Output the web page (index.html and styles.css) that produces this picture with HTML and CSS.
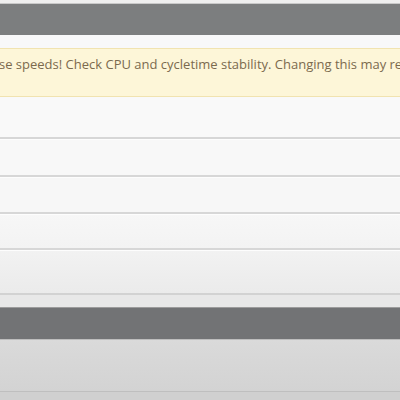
FILE: index.html
```html
<!DOCTYPE html>
<html lang="en">
<head>
    <meta charset="UTF-8">
    <title>Settings</title>
    <link rel="stylesheet" href="styles.css">
</head>
<body>
    <div class="top-strip"></div>

    <!-- first panel -->
    <div class="panel-heading"></div>
    <div class="panel-body">
        <div class="alert-warning">se speeds! Check CPU and cycletime stability. Changing this may re</div>
    </div>
    <div class="form-rows">
        <div class="form-row row-1"></div>
        <div class="form-row row-2"></div>
        <div class="form-row row-3"></div>
        <div class="form-row row-4"></div>
    </div>
    <div class="panel-gap"></div>

    <!-- second panel -->
    <div class="panel-heading dark"></div>
    <div class="panel-body-bottom"></div>
    <div class="panel-foot"></div>
</body>
</html>
```

FILE: styles.css
```css
body {
    font-family: 'Open Sans', 'DejaVu Sans', sans-serif;
    background-color: #d0d0d0;
    margin: 0;
    overflow: hidden;
}
.top-strip {
    height: 3px;
    background-color: #efefef;
    border-bottom: 1px solid #c9c9c9;
}
.panel-heading {
    height: 31px;
    background-color: #7c7e7f;
}
.panel-heading.dark {
    height: 31px;
    background-color: #727375;
    border-top: 1px solid #9c9c9c;
    border-bottom: 1px solid #bdbdbd;
}
.panel-body {
    background-color: #f8f8f9;
    padding-top: 13px;
}
.alert-warning {
    height: 49px;
    box-sizing: border-box;
    background-color: #fdf6d8;
    border-top: 1px solid #f1e3b0;
    border-bottom: 1px solid #f1e3b0;
    color: #7b6a4e;
    font-size: 13px;
    line-height: 18px;
    padding-top: 6px;
    white-space: nowrap;
    overflow: hidden;
    text-indent: -1px;
}
.form-rows {
    background-color: #f9f9f9;
    padding-top: 40px;
}
.form-row {
    border-top: 2px solid #d7d7d7;
    box-shadow: inset 0 1px 0 #fdfdfd;
}
.row-1 {
    height: 36px;
    background-color: #f8f8f8;
}
.row-2 {
    height: 35px;
    background-color: #f7f7f7;
}
.row-3 {
    height: 34px;
    background: linear-gradient(#f7f7f7, #f3f3f3);
}
.row-4 {
    height: 43px;
    background: linear-gradient(#f2f2f2, #ebebeb);
}
.panel-gap {
    height: 12px;
    background-color: #e8e8e8;
    border-top: 2px solid #d2d2d2;
}
.panel-body-bottom {
    height: 51px;
    background: linear-gradient(#dadada, #d3d3d3);
}
.panel-foot {
    height: 8px;
    background-color: #d0d0d0;
    border-top: 1px solid #bfbfbf;
}
```
